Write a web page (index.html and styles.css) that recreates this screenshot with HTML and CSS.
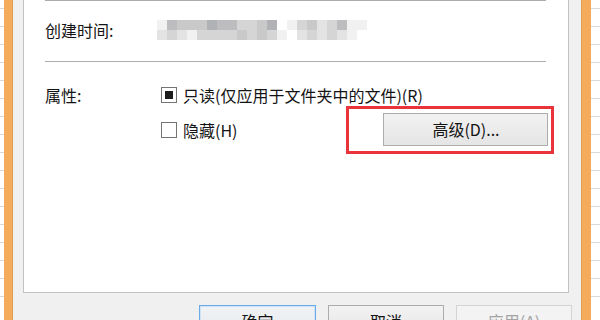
FILE: index.html
```html
<!DOCTYPE html>
<html lang="zh-CN">
<head>
<meta charset="utf-8">
<title>属性</title>
<link rel="stylesheet" href="styles.css">
</head>
<body>
<div class="screen">
  <div class="sheet sheet-left"></div>
  <div class="frame frame-left"></div>
  <div class="dialog">
    <div class="panel">
      <div class="sep"></div>
      <div class="info-row">
        <div class="info-label">创建时间:</div>
        <div class="blur">
          <span class="s1"></span><span class="s5"></span><span class="s4"></span><span class="s4"></span><span class="s4"></span><span class="s6"></span><span class="s5"></span><span class="s5"></span><span class="s3"></span><span class="s3"></span><span class="s4"></span><span class="s6"></span><span class="s0"></span><span class="s1"></span><span class="s3"></span><span class="s4"></span><span class="s2"></span><span class="s3"></span><span class="s5"></span><span class="s1"></span><span class="s1"></span>
          <span class="s2"></span><span class="s3"></span><span class="s2"></span><span class="s1"></span><span class="s3"></span><span class="s3"></span><span class="s3"></span><span class="s3"></span><span class="s4"></span><span class="s3"></span><span class="s4"></span><span class="s3"></span><span class="s1"></span><span class="s0"></span><span class="s2"></span><span class="s3"></span><span class="s2"></span><span class="s3"></span><span class="s2"></span><span class="s1"></span><span class="s0"></span>
        </div>
      </div>
      <div class="sep sep-gap"></div>
      <div class="attr-row">
        <div class="attr-label">属性:</div>
        <div class="attr-options">
          <div class="option">
            <span class="check partial"></span>
            <span class="option-text">只读(仅应用于文件夹中的文件)(R)</span>
          </div>
          <div class="option option-second">
            <span class="check"></span>
            <span class="option-text">隐藏(H)</span>
            <div class="adv-wrap">
              <button class="btn adv">高级(D)...</button>
              <span class="highlight"></span>
            </div>
          </div>
        </div>
      </div>
    </div>
    <div class="actions">
      <button class="btn default">确定</button>
      <button class="btn">取消</button>
      <button class="btn disabled">应用(A)</button>
    </div>
  </div>
  <div class="frame frame-right"></div>
  <div class="sheet sheet-right"></div>
</div>
</body>
</html>
```

FILE: styles.css
```css
html, body {
  margin: 0;
  padding: 0;
}
body {
  width: 600px;
  height: 320px;
  overflow: hidden;
  font-family: "Noto Sans CJK SC", "Noto Sans", sans-serif;
  font-size: 16px;
  color: #141414;
}
.screen {
  display: flex;
  width: 600px;
  height: 320px;
  overflow: hidden;
}
.sheet {
  flex: none;
  background: repeating-linear-gradient(to bottom, #ffffff 0 17px, #d9d9d9 17px 18px);
  background-position: 0 -9px;
}
.sheet-left {
  width: 4px;
}
.sheet-right {
  width: 9px;
  box-sizing: border-box;
}
.frame {
  flex: none;
  background: #f4ac5c;
}
.frame-left {
  width: 8px;
  border-right: 1px solid #e19b50;
}
.frame-right {
  width: 9px;
  border-left: 1px solid #e19b50;
}
.dialog {
  flex: 1;
  min-width: 0;
  background: #f0f0f0;
  display: flex;
  flex-direction: column;
}
.panel {
  flex: none;
  height: 293px;
  box-sizing: border-box;
  margin: 0 12px 0 10px;
  background: #ffffff;
  border: 1px solid #c2c2c2;
  border-top: none;
  padding: 0 22px 0 21px;
}
.sep {
  height: 1px;
  background: #acacac;
}
.sep-gap {
  margin-top: 21px;
}
.info-row {
  display: flex;
  align-items: center;
  margin-top: 19px;
  height: 20px;
}
.info-label {
  flex: none;
  width: 112px;
  line-height: 20px;
  white-space: nowrap;
}
.blur {
  flex: none;
  display: grid;
  grid-template-columns: repeat(21, 10px);
  grid-template-rows: 10px 10px;
}
.s0 { background: #ffffff; }
.s1 { background: #f1f1f1; }
.s2 { background: #e3e3e4; }
.s3 { background: #d5d5d6; }
.s4 { background: #c9c9ca; }
.s5 { background: #bdbdbf; }
.s6 { background: #b1b2b6; }
.attr-row {
  display: flex;
  margin-top: 23px;
}
.attr-label {
  flex: none;
  width: 116px;
  line-height: 20px;
  white-space: nowrap;
}
.attr-options {
  flex: none;
  display: flex;
  flex-direction: column;
  gap: 8px;
}
.option {
  display: flex;
  align-items: center;
  height: 20px;
}
.option-second {
  height: 33px;
}
.check {
  flex: none;
  width: 16px;
  height: 16px;
  box-sizing: border-box;
  border: 1px solid #747474;
  background: #ffffff;
  display: flex;
  align-items: center;
  justify-content: center;
  margin-right: 6px;
}
.check.partial::after {
  content: "";
  width: 8px;
  height: 8px;
  background: #1c1c1c;
}
.option-text {
  flex: none;
  line-height: 20px;
  white-space: nowrap;
}
.adv-wrap {
  flex: none;
  position: relative;
  margin-left: 146px;
}
.btn {
  font-family: "Noto Sans CJK SC", "Noto Sans", sans-serif;
  font-size: 16px;
  color: #141414;
  height: 33px;
  width: 116px;
  flex: none;
  box-sizing: border-box;
  border: 1px solid #acacac;
  background: linear-gradient(to bottom, #f2f2f2, #e5e5e5);
  padding: 0;
  line-height: 31px;
  margin: 0;
  white-space: nowrap;
}
.adv {
  width: 165px;
  display: block;
}
.highlight {
  position: absolute;
  left: -37px;
  right: -6px;
  top: -7px;
  bottom: -8px;
  border: 3px solid #e8343a;
}
.actions {
  display: flex;
  justify-content: flex-end;
  gap: 12px;
  margin-top: 12px;
  padding-right: 9px;
}
.btn.default {
  width: 117px;
  border-color: #6aaae8;
  box-shadow: inset 0 0 0 1px #cfe3f7;
  background: linear-gradient(to bottom, #f0f2f5, #e6e9ee);
}
.btn.disabled {
  border-color: #d3d3d3;
  background: #f3f3f3;
  color: #a3a3a3;
}
```
